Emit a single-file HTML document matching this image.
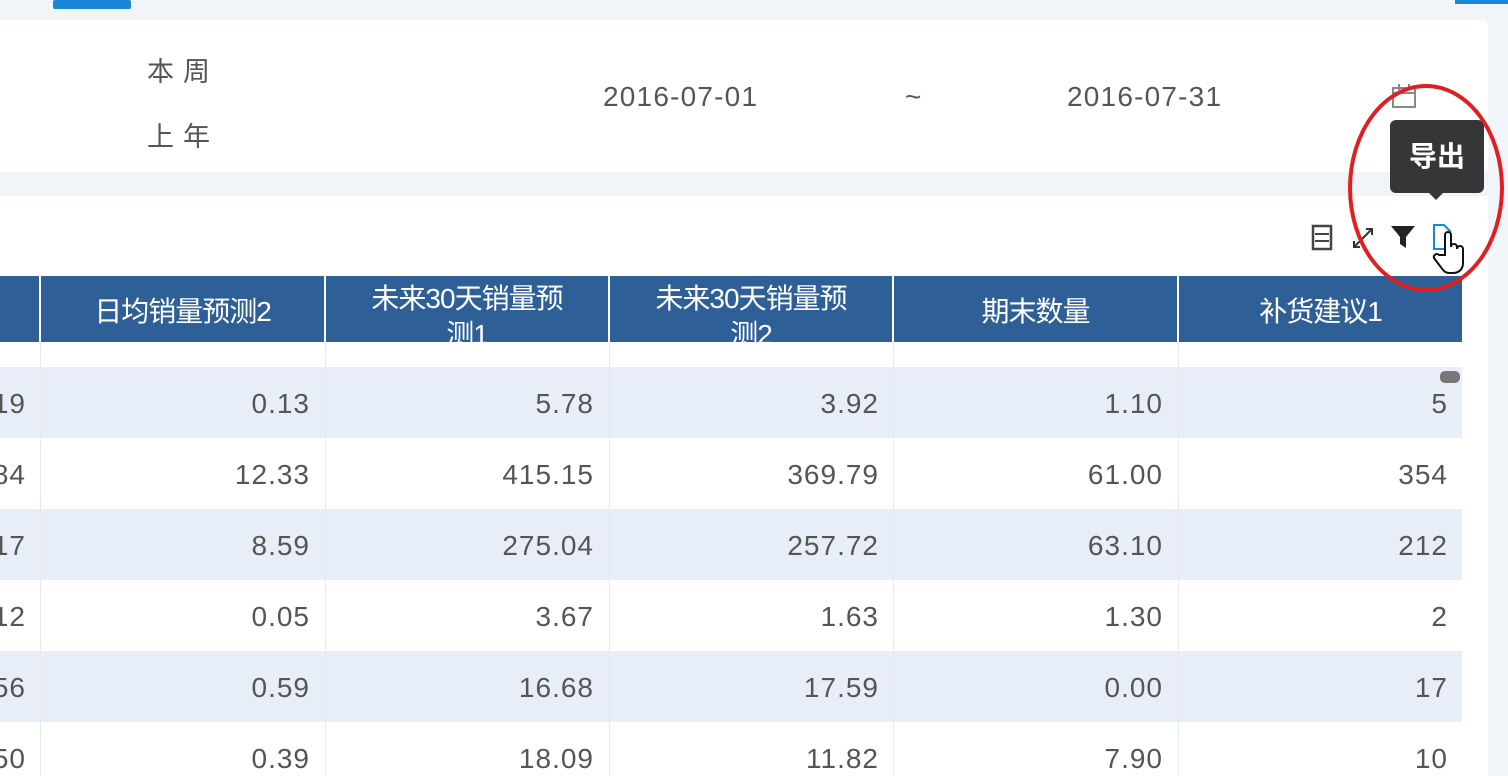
<!DOCTYPE html>
<html><head><meta charset="utf-8"><style>
body{margin:0;width:1508px;height:776px;overflow:hidden;background:#f1f4f9;font-family:"Liberation Sans","Noto Sans CJK SC",sans-serif;position:relative}
.a{position:absolute}
.hd{position:absolute;top:276px;height:66px;background:#2e5f96;color:#fff;font-size:28px;text-align:center;overflow:hidden;letter-spacing:-1px}
.row{position:absolute;left:0;width:1462px;height:71px}
.c{position:absolute;font-size:28px;letter-spacing:1px;color:#555;text-align:right;width:270px;top:22px}
.v{position:absolute;top:342px;bottom:0;width:1px;background:#e6e9ee}
</style></head><body>
<div class="a" style="left:53px;top:0;width:78px;height:9px;background:#1a86d8;border-radius:2px"></div>
<div class="a" style="left:1455px;top:0;width:53px;height:4px;background:#1a86d8"></div>
<div class="a" style="left:0;top:20px;width:1488px;height:152px;background:#fff;border-radius:0 6px 6px 0"></div>
<div class="a" style="left:147px;top:50px;font-size:27px;color:#555;letter-spacing:9px">本周</div>
<div class="a" style="left:147px;top:115px;font-size:27px;color:#555;letter-spacing:9px">上年</div>
<div class="a" style="left:603px;top:81px;font-size:28px;letter-spacing:1.2px;color:#555">2016-07-01</div>
<div class="a" style="left:905px;top:81px;font-size:28px;color:#555">~</div>
<div class="a" style="left:1067px;top:81px;font-size:28px;letter-spacing:1.2px;color:#555">2016-07-31</div>
<svg class="a" style="left:1390px;top:82px" width="30" height="30"><rect x="3" y="6" width="22" height="19" fill="none" stroke="#888" stroke-width="2"/><line x1="3" y1="11" x2="25" y2="11" stroke="#888" stroke-width="2"/><line x1="9" y1="2" x2="9" y2="8" stroke="#888" stroke-width="2"/><line x1="19" y1="2" x2="19" y2="8" stroke="#888" stroke-width="2"/></svg>
<div class="a" style="left:0;top:196px;width:1488px;height:580px;background:#fff"></div>
<div class="hd" style="left:0;width:39px"></div>
<div class="hd" style="left:41px;width:283px;line-height:72px">日均销量预测2</div>
<div class="hd" style="left:326px;width:282px;line-height:36px;padding-top:5px;box-sizing:border-box">未来30天销量预<br>测1</div>
<div class="hd" style="left:610px;width:282px;line-height:36px;padding-top:5px;box-sizing:border-box">未来30天销量预<br>测2</div>
<div class="hd" style="left:894px;width:283px;line-height:72px">期末数量</div>
<div class="hd" style="left:1179px;width:283px;line-height:72px">补货建议1</div>
<div class="row" style="top:367px;background:#e8eef8"></div>
<div class="row" style="top:509px;background:#e8eef8"></div>
<div class="row" style="top:651px;background:#e8eef8"></div>
<div class="v" style="left:40px"></div><div class="v" style="left:325px"></div><div class="v" style="left:609px"></div><div class="v" style="left:893px"></div><div class="v" style="left:1178px"></div>
<div id="d"></div>
<script>
var rows=[["19","0.13","5.78","3.92","1.10","5"],["84","12.33","415.15","369.79","61.00","354"],["17","8.59","275.04","257.72","63.10","212"],["12","0.05","3.67","1.63","1.30","2"],["56","0.59","16.68","17.59","0.00","17"],["50","0.39","18.09","11.82","7.90","10"]];
var rights=[26,310,594,879,1163,1448],h="";
rows.forEach(function(r,i){r.forEach(function(t,j){h+='<div class="c" style="left:'+(rights[j]-270)+'px;top:'+(388+i*71)+'px">'+t+'</div>'})});
document.getElementById('d').innerHTML=h;
</script>
<div class="a" style="left:1440px;top:371px;width:20px;height:12px;background:#777;border-radius:5px"></div>
<svg class="a" style="left:1300px;top:215px" width="180" height="80" viewBox="0 0 180 80">
<rect x="13" y="11" width="18" height="23" fill="none" stroke="#444" stroke-width="2.5"/><line x1="15" y1="19" x2="29" y2="19" stroke="#444" stroke-width="2"/><line x1="15" y1="26" x2="29" y2="26" stroke="#444" stroke-width="2"/>
<path d="M54 32 L72 14 M66 14 h6 v6 M54 26 v6 h6" stroke="#333" stroke-width="2" fill="none"/>
<path d="M91 11 h24 l-9 11 v11 l-6 -4 v-7 z" fill="#222"/>
<path d="M134 10 h10 l6 6 v18 h-16 z" fill="#fff" stroke="#1a86d8" stroke-width="2"/>
<path d="M145 40 v-20 a3 3 0 0 1 6 0 v12 a3 3 0 0 1 6 0 v2 a3 3 0 0 1 6 0 v14 c0 6 -4 10 -10 10 h-4 c-4 0 -6 -3 -9 -7 l-6 -8 a3 3 0 0 1 5 -3 z" fill="#fff" stroke="#111" stroke-width="2"/>
</svg>
<div class="a" style="left:1390px;top:120px;width:94px;height:73px;background:#353638;border-radius:6px;color:#fff;font-size:28px;font-weight:bold;line-height:73px;text-align:center">导出</div>
<div class="a" style="left:1428px;top:192px;width:0;height:0;border:8px solid transparent;border-top-color:#353638"></div>
<div class="a" style="left:1348px;top:84px;width:156px;height:208px;border:4px solid #e02020;border-radius:50%;box-sizing:border-box"></div>
</body></html>
